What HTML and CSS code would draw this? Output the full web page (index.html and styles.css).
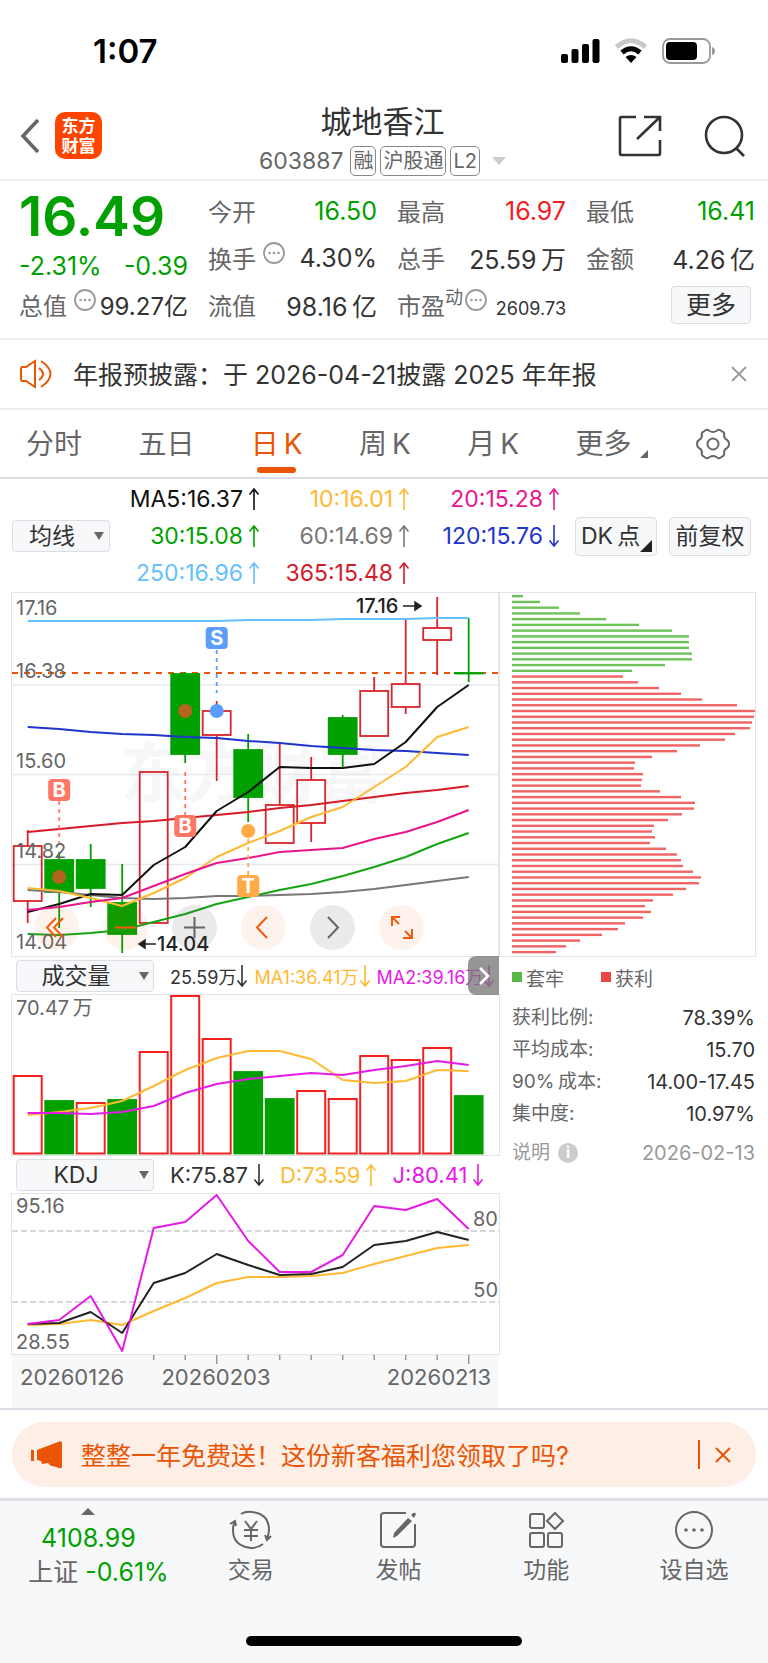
FILE: index.html
```html
<!DOCTYPE html>
<html lang="zh-CN">
<head>
  <meta charset="UTF-8" />
  <meta name="viewport" content="width=device-width, initial-scale=1.0" />
  <title>城地香江 603887</title>
  <link rel="stylesheet" href="styles.css">
</head>
<body>
  <svg class="sprite" width="0" height="0" aria-hidden="true">
    <symbol id="up" viewBox="0 0 12 24"><path d="M6 23V2M1.500 7.500L6 2l4.500 5.500" fill="none" stroke="currentColor" stroke-width="1.600"/></symbol>
    <symbol id="down" viewBox="0 0 12 24"><path d="M6 1v21M1.500 16.500L6 22l4.500-5.500" fill="none" stroke="currentColor" stroke-width="1.600"/></symbol>
    <symbol id="dots" viewBox="0 0 22 22">
      <circle cx="11" cy="11" r="10" fill="none" stroke="currentColor" stroke-width="1.800"/>
      <circle cx="6.500" cy="11" r="1.300" fill="currentColor"/><circle cx="11" cy="11" r="1.300" fill="currentColor"/><circle cx="15.500" cy="11" r="1.300" fill="currentColor"/>
    </symbol>
  </svg>

  <div class="status-bar">
    <span class="clock">1:07</span>
    <div class="status-icons">
      <svg width="39" height="26" viewBox="0 0 39 26"><rect x="0" y="16" width="7" height="9" rx="2"/><rect x="10.500" y="11" width="7" height="14" rx="2"/><rect x="21" y="6" width="7" height="19" rx="2"/><rect x="31.500" y="1" width="7" height="24" rx="2"/></svg>
      <svg width="34" height="26" viewBox="0 0 34 26" fill="none">
        <path d="M2.500 9Q17-3.500 31.500 9" stroke="#c8c8c8" stroke-width="5"/>
        <path d="M8 14.500Q17 7 26 14.500" stroke="#000" stroke-width="5"/>
        <path d="M11.500 19Q17 15 22.500 19L17 25z" fill="#000"/>
      </svg>
      <svg width="54" height="26" viewBox="0 0 54 26"><rect x="1" y="1" width="47" height="24" rx="7" fill="none" stroke="#999" stroke-width="1.800"/><rect x="4" y="4" width="31" height="18" rx="4"/><path d="M50 9q3 1 3 4t-3 4z" fill="#999"/></svg>
    </div>
  </div>

  <header class="header">
    <div class="header-left">
      <button class="icon-btn" aria-label="返回"><svg width="22" height="36" viewBox="0 0 22 36"><path d="M19 2L4 18l15 16" fill="none" stroke="#666" stroke-width="3.600"/></svg></button>
      <a href="#" class="logo">东方<br>财富</a>
    </div>
    <div class="header-title">
      <h1>城地香江</h1>
      <div class="stock-code">
        <span>603887</span>
        <span class="tag">融</span><span class="tag">沪股通</span><span class="tag">L2</span>
        <i class="caret"></i>
      </div>
    </div>
    <div class="header-right">
      <button class="icon-btn" aria-label="分享"><svg width="44" height="42" viewBox="0 0 44 42" fill="none" stroke="#333" stroke-width="2.600"><path d="M18 2H3.500Q2 2 2 3.500V38.500Q2 40 3.500 40H40.500Q42 40 42 38.500V25M26 2H42V16M42 2L19 24"/></svg></button>
      <button class="icon-btn" aria-label="搜索"><svg width="42" height="42" viewBox="0 0 42 42" fill="none" stroke="#333" stroke-width="2.600"><circle cx="20" cy="20" r="18"/><path d="M32 33l8 8"/></svg></button>
    </div>
  </header>

  <section class="quote">
    <div class="quote-col">
      <div class="price">16.49</div>
      <div class="cell down change"><span>-2.31%</span><span>-0.39</span></div>
      <div class="cell"><span class="label">总值<svg class="dots"><use href="#dots"/></svg></span><span class="market-cap">99.27亿</span></div>
    </div>
    <div class="quote-col">
      <div class="cell"><span class="label">今开</span><span class="down">16.50</span></div>
      <div class="cell"><span class="label">换手<svg class="dots"><use href="#dots"/></svg></span><span>4.30%</span></div>
      <div class="cell"><span class="label">流值</span><span>98.16&thinsp;亿</span></div>
    </div>
    <div class="quote-col">
      <div class="cell"><span class="label">最高</span><span class="up">16.97</span></div>
      <div class="cell"><span class="label">总手</span><span>25.59&thinsp;万</span></div>
      <div class="cell"><span class="label">市盈<sup>动</sup><svg class="dots tight"><use href="#dots"/></svg></span><span class="small">2609.73</span></div>
    </div>
    <div class="quote-col">
      <div class="cell"><span class="label">最低</span><span class="down">16.41</span></div>
      <div class="cell"><span class="label">金额</span><span>4.26&thinsp;亿</span></div>
      <div class="cell more-cell"><button class="btn more-btn">更多</button></div>
    </div>
  </section>

  <section class="notice">
    <svg width="34" height="30" viewBox="0 0 34 30" fill="none" stroke="#ea5504" stroke-width="2"><path d="M2 9.500Q2 8 3.500 8H7L16 2V28L7 22H3.500Q2 22 2 20.500z"/><path d="M20 9q8 6 0 12M22 2q19 13 0 26"/></svg>
    <p>年报预披露：于 2026-04-21披露 2025 年年报</p>
    <button class="icon-btn" aria-label="关闭"><svg width="16" height="16" viewBox="0 0 16 16"><path d="M1 1l14 14M15 1L1 15" stroke="#999" stroke-width="1.800"/></svg></button>
  </section>

  <nav class="tabs">
    <a href="#">分时</a>
    <a href="#">五日</a>
    <a href="#" class="active">日&thinsp;K</a>
    <a href="#">周&thinsp;K</a>
    <a href="#">月&thinsp;K</a>
    <a href="#" class="has-corner">更多</a>
    <button class="icon-btn" aria-label="设置"><svg width="34" height="32" viewBox="0 0 34 32" fill="none" stroke="#666" stroke-width="2"><path d="M10 2Q12 1 13.500 3Q17 5 20.500 3Q22 1 24 2L27 4Q29 5 28 8Q28.500 11 31 12Q33 13 33 16Q33 19 31 20Q28.500 21 28 24Q29 27 27 28L24 30Q22 31 20.500 29Q17 27 13.500 29Q12 31 10 30L7 28Q5 27 6 24Q5.500 21 3 20Q1 19 1 16Q1 13 3 12Q5.500 11 6 8Q5 5 7 4z"/><circle cx="17" cy="16" r="5.500"/></svg></button>
  </nav>

  <section class="ma-bar">
    <div class="select ma-select"><select aria-label="主图指标"><option>均线</option></select></div>
    <div class="ma-values">
      <span class="c-black">MA5:16.37<svg class="arrow"><use href="#up"/></svg></span>
      <span class="c-orange">10:16.01<svg class="arrow"><use href="#up"/></svg></span>
      <span class="c-pink">20:15.28<svg class="arrow"><use href="#up"/></svg></span>
      <span class="c-green">30:15.08<svg class="arrow"><use href="#up"/></svg></span>
      <span class="c-gray">60:14.69<svg class="arrow"><use href="#up"/></svg></span>
      <span class="c-blue">120:15.76<svg class="arrow"><use href="#down"/></svg></span>
      <span class="c-sky">250:16.96<svg class="arrow"><use href="#up"/></svg></span>
      <span class="c-red">365:15.48<svg class="arrow"><use href="#up"/></svg></span>
    </div>
    <div class="ma-buttons">
      <button class="btn dk-btn">DK&thinsp;点</button>
      <button class="btn">前复权</button>
    </div>
  </section>

  <main class="charts">
    <div class="chart-col">
      <div class="main-chart">
        <svg id="kline" class="plot" viewBox="0 0 487 363">
          <text class="watermark" x="108" y="204">东方财富</text>
          <g class="grid"><path d="M0 92H487M0 181.500H487M0 271.500H487"/></g>
          <path class="last-price" d="M0 80H487"/>
          <g class="candles"></g>
          <g class="lines"></g>
          <g class="axis">
            <text x="4" y="22">17.16</text><text x="4" y="85">16.38</text><text x="4" y="175">15.60</text><text x="4" y="265">14.82</text><text x="4" y="356">14.04</text>
          </g>
          <g class="marks"></g>
          <g class="peak">
            <text x="344" y="20">17.16</text><path d="M391 13H408M403 9l6 4-6 4z"/>
            <text x="145" y="358">14.04</text><path d="M144 351H127M133 347l-6 4 6 4z"/>
          </g>
        </svg>
        <div class="controls">
          <button aria-label="最左"><svg viewBox="0 0 45 45"><path d="M22 13L13 22.500L22 32M29 13L20 22.500L29 32"/></svg></button>
          <button aria-label="缩小"><svg viewBox="0 0 45 45"><path d="M12 22.500H33"/></svg></button>
          <button class="gray" aria-label="放大"><svg viewBox="0 0 45 45"><path d="M12 22.500H33M22.500 12V33"/></svg></button>
          <button aria-label="左移"><svg viewBox="0 0 45 45"><path d="M26 12L16 22.500L26 33"/></svg></button>
          <button class="gray" aria-label="右移"><svg viewBox="0 0 45 45"><path d="M18 12L28 22.500L18 33"/></svg></button>
          <button aria-label="全屏"><svg viewBox="0 0 45 45"><path d="M13 21V12H21M13 12L20 19M33 24V33H24M33 33L26 26"/></svg></button>
        </div>
      </div>

      <div class="sub-head volume-head">
        <div class="select"><select aria-label="副图指标一"><option>成交量</option></select></div>
        <span class="c-dark">25.59万<svg class="arrow"><use href="#down"/></svg></span>
        <span class="c-orange">MA1:36.41万<svg class="arrow"><use href="#down"/></svg></span>
        <span class="c-magenta">MA2:39.16万<svg class="arrow"><use href="#down"/></svg></span>
        <button class="expand" aria-label="展开"><svg width="14" height="20" viewBox="0 0 14 20"><path d="M3 2l8 8-8 8" fill="none" stroke="#fff" stroke-width="2.600"/></svg></button>
      </div>
      <svg id="volume" class="plot framed" viewBox="0 0 487 160">
        <g class="bars"></g>
        <g class="lines"></g>
        <g class="axis"><text x="4" y="20">70.47&thinsp;万</text></g>
      </svg>

      <div class="sub-head kdj-head">
        <div class="select"><select aria-label="副图指标二"><option>KDJ</option></select></div>
        <span class="c-dark">K:75.87<svg class="arrow"><use href="#down"/></svg></span>
        <span class="c-orange">D:73.59<svg class="arrow"><use href="#up"/></svg></span>
        <span class="c-magenta">J:80.41<svg class="arrow"><use href="#down"/></svg></span>
      </div>
      <svg id="kdj" class="plot framed" viewBox="0 0 487 160">
        <path class="level" d="M0 37H487M0 108H487"/>
        <g class="lines"></g>
        <g class="axis">
          <text x="4" y="19">95.16</text><text x="4" y="155">28.55</text>
          <text x="486" y="32" text-anchor="end">80</text><text x="486" y="103" text-anchor="end">50</text>
        </g>
      </svg>
      <svg id="dates" class="plot date-axis" viewBox="0 0 487 54">
        <g class="ticks"></g>
        <text x="8" y="31">20260126</text><text x="204" y="31" text-anchor="middle">20260203</text><text x="479" y="31" text-anchor="end">20260213</text>
      </svg>
    </div>

    <aside class="chips-col">
      <svg id="chips" class="plot chips" viewBox="0 0 256 363"></svg>
      <div class="legend">
        <span class="trapped">套牢</span>
        <span class="profit">获利</span>
      </div>
      <dl class="chip-stats">
        <div><dt>获利比例:</dt><dd>78.39%</dd></div>
        <div><dt>平均成本:</dt><dd>15.70</dd></div>
        <div><dt>90%&thinsp;成本:</dt><dd>14.00-17.45</dd></div>
        <div><dt>集中度:</dt><dd>10.97%</dd></div>
      </dl>
      <div class="chip-foot">
        <a href="#">说明<i class="info">i</i></a>
        <time>2026-02-13</time>
      </div>
    </aside>
  </main>

  <section class="promo-wrap">
    <div class="promo">
      <svg width="32" height="28" viewBox="0 0 32 28" fill="#ea5504"><rect x="0" y="9" width="3" height="11"/><path d="M6 9L27 1Q31-1 31 2V25Q31 28 28 27L22 25Q20 26 17 22L11 23L10 20L6 19z"/></svg>
      <a href="#">整整一年免费送！这份新客福利您领取了吗?</a>
      <button class="icon-btn" aria-label="关闭"><svg width="16" height="16" viewBox="0 0 16 16"><path d="M1 1l14 14M15 1L1 15" stroke="#ea5504" stroke-width="2"/></svg></button>
    </div>
  </section>

  <footer class="bottom">
    <nav class="bottom-nav">
      <a href="#" class="index">
        <i class="caret-up"></i>
        <span class="down">4108.99</span>
        <span class="index-change">上证 <b class="down">-0.61%</b></span>
      </a>
      <a href="#"><svg width="44" height="40" viewBox="0 0 44 40"><path d="M12 4Q17 1 23 2Q40 4 40 20Q40 24 38 28M42 26l-4 4-2-5M34 34Q29 38 22 38Q4 36 4 20Q4 15 6 11M1 14l5-3 1 5M16 11l6 8 6-8M22 19V31M15 20H29M15 26H29"/></svg>交易</a>
      <a href="#"><svg width="40" height="40" viewBox="0 0 40 40"><path d="M28 3H6Q3 3 3 6V34Q3 37 6 37H34Q37 37 37 34V14"/><path class="solid" d="M30 8l4 3L19 26l-4 2 1-5zM33 5l2-2q2-1 3 1l-2 4z"/></svg>发帖</a>
      <a href="#"><svg width="40" height="40" viewBox="0 0 40 40"><rect x="4" y="4" width="14" height="14" rx="2"/><rect x="4" y="23" width="14" height="14" rx="2"/><rect x="22" y="23" width="14" height="14" rx="2"/><path d="M29 3l8 8-8 8-8-8z"/></svg>功能</a>
      <a href="#"><svg width="40" height="40" viewBox="0 0 40 40"><circle cx="20" cy="20" r="18"/><g class="solid"><circle cx="12" cy="20" r="1.800"/><circle cx="20" cy="20" r="1.800"/><circle cx="28" cy="20" r="1.800"/></g></svg>设自选</a>
    </nav>
    <div class="home-indicator"></div>
  </footer>

  <script src="chart.js"></script>
</body>
</html>
```

FILE: styles.css
```css
:root {
  --green: #00a000;
  --red: #f52020;
  --candle-red: #d7262c;
  --orange: #ea5504;
  --text: #333;
  --muted: #666;
  --line: #e3e4e8;
  --panel: #f7f8fa;
}
* {
  margin: 0;
  padding: 0;
  box-sizing: border-box;
}
body {
  font-family: Inter, "Noto Sans CJK SC", sans-serif;
  font-size: 24px;
  color: var(--text);
  background: #fff;
}
a {
  color: inherit;
  text-decoration: none;
}
button, select {
  font: inherit;
  color: inherit;
  background: none;
  border: 0;
}
svg {
  display: block;
}
.sprite {
  position: absolute;
}
.icon-btn {
  display: flex;
}
.up { color: var(--red); }
.down { color: var(--green); }
.btn {
  background: var(--panel);
  border: 1px solid #dcdee3;
  border-radius: 4px;
  white-space: nowrap;
}

/* Status bar */
.status-bar {
  display: flex;
  justify-content: space-between;
  align-items: center;
  height: 102px;
  padding: 0 52px 0 93px;
}
.clock {
  font-size: 33px;
  font-weight: 600;
  color: #000;
}
.status-icons {
  display: flex;
  gap: 14px;
}

/* Header */
.header {
  display: grid;
  grid-template-columns: 1fr auto 1fr;
  align-items: center;
  height: 79px;
  padding: 0 22px 0 19px;
  border-bottom: 2px solid #ededef;
}
.header-left, .header-right {
  display: flex;
  align-items: center;
}
.header-left { gap: 14px; padding-bottom: 10px; }
.header-right { gap: 42px; justify-content: flex-end; padding-bottom: 10px; }
.logo {
  width: 47px;
  height: 47px;
  border-radius: 10px;
  background: #ff4400;
  color: #fff;
  font-size: 17px;
  font-weight: 700;
  line-height: 20px;
  padding-top: 4px;
  text-align: center;
}
.header-title { text-align: center; }
.header-title h1 {
  font-size: 31px;
  font-weight: 400;
  line-height: 36px;
  padding-bottom: 5px;
}
.stock-code {
  display: flex;
  align-items: center;
  gap: 4px;
  height: 33px;
  font-size: 23px;
  color: var(--muted);
}
.stock-code span:first-child { margin-right: 3px; }
.tag {
  border: 1px solid #888;
  border-radius: 5px;
  font-size: 20px;
  line-height: 28px;
  padding: 0 2px;
}
.caret {
  margin-left: 8px;
  border: 7px solid transparent;
  border-top: 8px solid #ccc;
  border-bottom: 0;
}

/* Quote */
.quote {
  display: grid;
  grid-template-columns: repeat(4, 1fr);
  gap: 20px;
  padding: 6px 13px 11px 19px;
  height: 159px;
  border-bottom: 2px solid #ededef;
}
.quote-col {
  display: flex;
  flex-direction: column;
}
.cell {
  display: flex;
  justify-content: space-between;
  align-items: center;
  height: 47px;
  font-size: 25px;
  white-space: nowrap;
}
.cell .label {
  display: flex;
  font-size: 24px;
  color: var(--muted);
}
.price {
  height: 58px;
  font-size: 55px;
  font-weight: 600;
  line-height: 58px;
  color: var(--green);
}
.quote .change { height: 36px; padding-top: 6px; }
.dots {
  width: 22px;
  height: 22px;
  margin: 2px 0 0 7px;
  color: #999;
}
.dots.tight { margin-left: 2px; }
.label sup {
  font-size: 18px;
  line-height: 22px;
}
.market-cap { font-size: 24px; }
.cell .small { font-size: 18px; padding-top: 8px; }
.more-cell { justify-content: flex-end; padding-right: 4px; }
.more-btn {
  width: 80px;
  height: 38px;
  line-height: 34px;
}

/* Notice */
.notice {
  display: flex;
  align-items: center;
  height: 70px;
  padding: 0 21px 0 19px;
  border-bottom: 2px solid #ededef;
}
.notice p {
  flex: 1;
  margin-left: 20px;
  padding-bottom: 3px;
  font-size: 25px;
}

/* Period tabs */
.tabs {
  display: flex;
  justify-content: space-between;
  align-items: center;
  height: 69px;
  padding: 0 38px 0 26px;
  border-bottom: 2px solid #dcdde4;
  font-size: 28px;
  color: var(--muted);
}
.tabs a {
  line-height: 66px;
  position: relative;
}
.tabs .active { color: var(--orange); }
.tabs .active::after {
  content: "";
  position: absolute;
  left: 50%;
  bottom: 4px;
  width: 39px;
  height: 6px;
  margin-left: -20px;
  border-radius: 3px;
  background: var(--orange);
}
.tabs .has-corner { padding-right: 8px; }
.has-corner::after, .dk-btn::after {
  content: "";
  position: absolute;
  right: -8px;
  bottom: 19px;
  border: 4px solid var(--muted);
  border-top-color: transparent;
  border-left-color: transparent;
}

/* Moving averages */
.ma-bar {
  display: grid;
  grid-template-columns: 98px 1fr auto;
  align-items: center;
  padding: 0 17px 0 12px;
  height: 114px;
}
.select {
  position: relative;
}
.select select {
  appearance: none;
  width: 100%;
  height: 32px;
  padding: 0 26px 0 8px;
  text-align-last: center;
  background: var(--panel);
  border: 1px solid #dcdee3;
  border-radius: 4px;
  font-size: 23px;
  line-height: 28px;
}
.select::after {
  content: "";
  position: absolute;
  right: 6px;
  top: 12px;
  border: 5px solid transparent;
  border-top: 8px solid var(--muted);
  border-bottom: 0;
}
.ma-values {
  display: grid;
  grid-template-columns: repeat(3, 150px);
  justify-content: end;
  margin-right: 15px;
  font-size: 23px;
  line-height: 37px;
}
.ma-values span, .sub-head span {
  display: flex;
  justify-content: flex-end;
  align-items: center;
  gap: 5px;
  white-space: nowrap;
}
.arrow {
  width: 12px;
  height: 24px;
}
.ma-buttons {
  display: flex;
  gap: 12px;
}
.ma-buttons .btn {
  position: relative;
  width: 82px;
  height: 39px;
  font-size: 23px;
  line-height: 35px;
}
.ma-buttons .dk-btn { text-align: left; padding-left: 5px; }
.dk-btn::after {
  right: 4px;
  bottom: 3px;
  border-width: 6px;
  border-right-color: #222;
  border-bottom-color: #222;
}
.c-black { color: #111; }
.c-dark { color: #333; }
.c-orange { color: #ffb932; }
.c-pink { color: #e8158c; }
.c-green { color: #00a000; }
.c-gray { color: #777; }
.c-blue { color: #1f35cc; }
.c-sky { color: #66bfff; }
.c-red { color: #d71a28; }
.c-magenta { color: #e61ae6; }

/* Charts */
.charts {
  display: grid;
  grid-template-columns: minmax(0, 487fr) minmax(0, 256fr);
  padding: 0 13px 0 12px;
  border-bottom: 2px solid #dcdde4;
}
.plot {
  width: 100%;
  height: auto;
}
.plot text { fill: var(--muted); font-size: 20px; }
.main-chart { position: relative; }
.main-chart .plot, .framed, .chips { outline: 1px solid var(--line); }
.plot .watermark {
  fill: #f7f7f8;
  font-size: 66px;
  font-weight: 700;
}
.grid path { stroke: #e8e9f0; stroke-width: 1.5; }
.last-price {
  stroke: var(--orange);
  stroke-width: 2;
  stroke-dasharray: 6 6;
}
.lines polyline { fill: none; stroke-width: 2; stroke-linejoin: round; }
.rise { fill: none; stroke: var(--candle-red); stroke-width: 1.8; }
.fall { fill: var(--green); stroke: var(--green); stroke-width: 1.8; }
.bars .rise { stroke: var(--red); stroke-width: 2; }
.plot .peak text { fill: #222; font-weight: 500; font-size: 20px; }
.peak path { fill: #222; stroke: #222; stroke-width: 1.5; }
.plot .marks text { fill: #fff; font-weight: 700; font-size: 20px; text-anchor: middle; }
.marks path { stroke-width: 1.8; stroke-dasharray: 4 4; }
.level { stroke: #ccc; stroke-width: 1.5; stroke-dasharray: 6 3; }
.controls {
  position: absolute;
  left: 22px;
  bottom: 6px;
  display: flex;
  gap: 24px;
}
.controls button {
  width: 45px;
  height: 45px;
  border-radius: 50%;
  background: rgba(240, 90, 20, 0.08);
  color: #f55a0a;
}
.controls .gray {
  background: rgba(80, 80, 80, 0.12);
  color: var(--muted);
}
.controls path { fill: none; stroke: currentColor; stroke-width: 2; }
.sub-head {
  position: relative;
  display: flex;
  align-items: center;
  height: 39px;
  padding-left: 4px;
}
.sub-head .select {
  width: 138px;
  flex: none;
  margin-right: 16px;
}
.sub-head .select::after { right: 5px; }
.volume-head { font-size: 18px; }
.volume-head span { margin-right: 6px; gap: 0; }
.kdj-head { font-size: 22px; }
.kdj-head span { margin-right: 15px; }
.expand {
  position: absolute;
  right: 0;
  top: 0;
  display: flex;
  align-items: center;
  justify-content: center;
  width: 31px;
  height: 39px;
  border-radius: 8px 0 0 8px;
  background: rgba(120, 120, 120, 0.78);
}
.date-axis { background: var(--panel); }
.plot.date-axis text { font-size: 22px; }
.ticks path { stroke: #999; stroke-width: 1.5; }

/* Chip distribution */
.legend {
  display: flex;
  gap: 37px;
  height: 42px;
  padding-left: 13px;
  font-size: 19px;
  color: var(--muted);
}
.legend span {
  display: flex;
  align-items: center;
  gap: 4px;
}
.legend span::before {
  content: "";
  width: 10px;
  height: 10px;
  background: #5ab946;
}
.legend .profit::before { background: #eb4646; }
.chip-stats { padding: 4px 0 0 13px; }
.chip-stats div, .chip-foot {
  display: flex;
  justify-content: space-between;
  font-size: 19px;
  line-height: 32px;
}
.chip-stats dt { color: var(--muted); }
.chip-stats dd, .chip-foot time { font-size: 20px; }
.chip-foot {
  padding: 7px 0 0 13px;
  color: #999;
}
.chip-foot a { display: flex; align-items: center; gap: 8px; }
.info {
  width: 20px;
  height: 20px;
  border-radius: 50%;
  background: #ccc;
  color: #fff;
  font-size: 15px;
  font-style: normal;
  font-weight: 700;
  line-height: 20px;
  text-align: center;
}

/* Promo */
.promo-wrap { padding: 12px 12px 11px; }
.promo {
  display: flex;
  align-items: center;
  height: 65px;
  padding: 0 25px 0 19px;
  border-radius: 33px;
  background: #fdeee6;
  color: var(--orange);
}
.promo a {
  flex: 1;
  margin-left: 18px;
  padding-bottom: 2px;
  font-size: 25px;
}
.promo .icon-btn {
  align-items: center;
  height: 29px;
  padding-left: 15px;
  border-left: 2px solid var(--orange);
}

/* Bottom bar */
.bottom {
  height: 167px;
  border-top: 3px solid #dfe0e4;
  background: var(--panel);
}
.bottom-nav {
  display: grid;
  grid-template-columns: 177fr 148fr 148fr 148fr 148fr;
  color: var(--muted);
}
.bottom-nav a {
  display: flex;
  flex-direction: column;
  align-items: center;
  padding-top: 9px;
  font-size: 23px;
  line-height: 40px;
}
.bottom-nav svg { fill: none; stroke: var(--muted); stroke-width: 2; }
.bottom-nav .solid { fill: var(--muted); stroke: none; }
.bottom-nav .index {
  padding-top: 7px;
  font-size: 25px;
  line-height: 34px;
}
.index-change { padding-left: 20px; }
.index b { font-weight: 400; }
.caret-up {
  margin-bottom: 6px;
  border: 7px solid transparent;
  border-bottom: 7px solid var(--muted);
  border-top: 0;
}
.home-indicator {
  width: 36%;
  height: 10px;
  margin: 46px auto 0;
  border-radius: 5px;
  background: #000;
}
```

FILE: chart.js
```js
const NS = 'http://www.w3.org/2000/svg';
const STEP = 31.5;
const X0 = 15.7;
const BODY = 28;

// [high, top, bottom, low, rising]
const candles = [
  [237, 253, 308, 330, 1], [259, 267, 299, 335, 0], [251, 267, 295, 314, 0],
  [271, 310, 341, 360, 0], [179, 179, 330, 330, 1], [79, 81, 161, 170, 0],
  [108, 118, 142, 188, 1], [141, 157, 204, 229, 0], [151, 212, 250, 250, 1],
  [164, 187, 230, 249, 1], [122, 125, 161, 175, 0], [84, 98, 143, 143, 1],
  [26, 91, 114, 121, 1], [4, 35, 47, 82, 1], [25, 80, 80, 89, 0]
];

const averages = {
  '#66bfff': [28, 28, 28, 28, 28, 28, 28, 27, 27, 27, 26, 26, 26, 25, 25],
  '#1f35cc': [134, 136, 139, 141, 142, 144, 145, 148, 150, 153, 155, 157, 158, 160, 162],
  '#d71a28': [239, 236, 233, 230, 228, 225, 222, 219, 215, 212, 208, 204, 200, 197, 193],
  '#777': [297, 299, 302, 305, 306, 305, 303, 303, 302, 301, 299, 296, 292, 288, 284],
  '#14a514': [341, 342, 340, 337, 329, 321, 311, 304, 297, 291, 283, 274, 264, 251, 240],
  '#111': [319, 311, 301, 302, 272, 254, 218, 199, 174, 175, 175, 171, 149, 114, 92],
  '#ffb932': [295, 298, 305, 313, 300, 285, 264, 250, 238, 224, 214, 194, 174, 144, 134],
  '#e8158c': [317, 314, 309, 305, 293, 281, 270, 265, 259, 257, 255, 246, 239, 229, 217]
};

// Trade markers: letter, candle index, box top, dot y, dash from / to
const marks = [
  ['B', 1, 186, 284, 208, 250, '#ff7866', '#b4641e'],
  ['B', 5, 222, 118, 179, 222, '#ff7866', '#b4641e'],
  ['S', 6, 34, 118, 57, 100, '#5a9dfa', '#5a9dfa'],
  ['T', 7, 282, 238, 238, 282, '#ffaa46', '#ffaa46']
];

// [top, rising]
const volumes = [
  [81, 1], [106, 0], [108, 1], [105, 0], [57, 1], [1, 1], [44, 1], [77, 0],
  [104, 0], [96, 1], [104, 1], [61, 1], [65, 1], [53, 1], [101, 0]
];
const volumeLines = {
  '#ffb932': [120, 117, 113, 106, 91, 75, 63, 56, 56, 64, 85, 88, 86, 75, 76],
  '#e61ae6': [118, 118, 119, 117, 111, 98, 89, 84, 81, 78, 80, 75, 71, 66, 70]
};

const kdjLines = {
  '#ffb932': [131, 130, 126, 131, 117, 104, 89, 83, 83, 82, 79, 70, 62, 54, 51],
  '#222': [130, 129, 118, 139, 89, 79, 60, 71, 81, 80, 73, 51, 47, 38, 46],
  '#e61ae6': [130, 126, 102, 157, 34, 28, 1, 47, 78, 78, 61, 12, 16, 5, 35]
};

const trapped = [11, 28, 47, 68, 94, 127, 160, 177, 177, 177, 180, 180, 153, 120];
const profit = [
  111, 126, 147, 169, 190, 225, 243, 242, 240, 238, 223, 213, 188, 165, 140, 123, 122,
  131, 130, 129, 148, 169, 183, 182, 170, 156, 142, 140, 143, 138, 154, 165, 169, 171,
  181, 189, 187, 174, 161, 141, 133, 139, 131, 113, 106, 90, 68, 54, 44
];

function add(parent, tag, attrs, text) {
  const el = document.createElementNS(NS, tag);
  for (const key in attrs) el.setAttribute(key, attrs[key]);
  if (text) el.textContent = text;
  parent.appendChild(el);
}

function x(i) {
  return X0 + i * STEP;
}

function drawLines(selector, lines) {
  const group = document.querySelector(selector + ' .lines');
  for (const color in lines) {
    const points = lines[color].map((y, i) => x(i) + ',' + y).join(' ');
    add(group, 'polyline', { points, stroke: color });
  }
}

const candleGroup = document.querySelector('#kline .candles');
candles.forEach(([high, top, bottom, low, rising], i) => {
  const cls = rising ? 'rise' : 'fall';
  add(candleGroup, 'path', { class: cls, d: `M${x(i)} ${high}V${top}M${x(i)} ${bottom}V${low}` });
  add(candleGroup, 'rect', { class: cls, x: x(i) - BODY / 2, y: top, width: BODY, height: Math.max(bottom - top, 0.5) });
});
drawLines('#kline', averages);

const markGroup = document.querySelector('#kline .marks');
marks.forEach(([letter, i, top, dot, from, to, color, dotColor]) => {
  add(markGroup, 'path', { d: `M${x(i)} ${from}V${to}`, stroke: color });
  add(markGroup, 'circle', { cx: x(i), cy: dot, r: 7, fill: dotColor });
  add(markGroup, 'rect', { x: x(i) - 11, y: top, width: 22, height: 22, rx: 4, fill: color });
  add(markGroup, 'text', { x: x(i), y: top + 18 }, letter);
});

const barGroup = document.querySelector('#volume .bars');
volumes.forEach(([top, rising], i) => {
  add(barGroup, 'rect', { class: rising ? 'rise' : 'fall', x: x(i) - BODY / 2, y: top, width: BODY, height: 158.5 - top });
});
drawLines('#volume', volumeLines);
drawLines('#kdj', kdjLines);

const tickGroup = document.querySelector('#dates .ticks');
for (let i = 4; i < 15; i++) {
  add(tickGroup, 'path', { d: `M${x(i)} 0V${i === 6 || i === 14 ? 10 : 6}` });
}

const chips = document.getElementById('chips');
trapped.concat(profit).forEach((width, i) => {
  add(chips, 'rect', { x: 13, y: 2 + i * 5.74, width, height: 2.4, fill: i < trapped.length ? '#6ec35a' : '#f06464' });
});
```
